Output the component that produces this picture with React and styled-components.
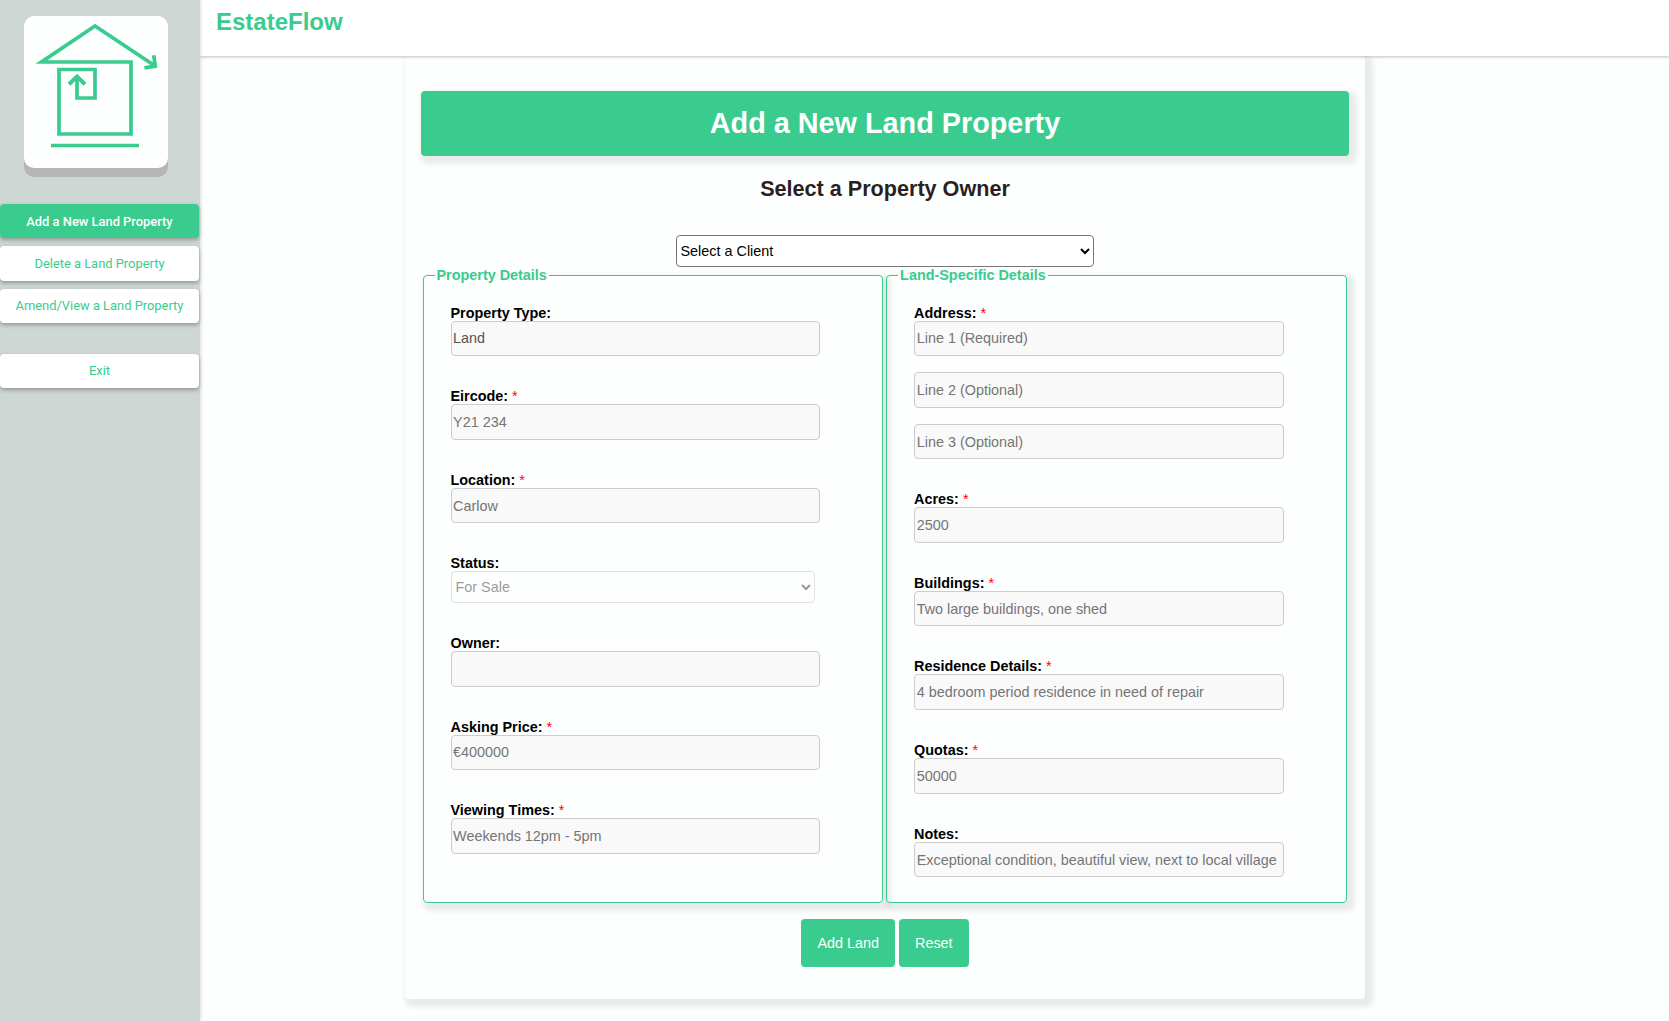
import React from "react";
import styled, { createGlobalStyle, css } from "styled-components";

const GREEN = "#3acb8e";
const PAPER = "#fdfffe";

const GlobalStyle = createGlobalStyle`
  * { box-sizing: border-box; }
  html, body { margin: 0; background: ${PAPER}; }
  body, input, select, button { font-family: "Liberation Sans", Arial, sans-serif; }
`;

const raised = css`
  box-shadow: 4px 4px 5px 4px rgba(0, 0, 0, 0.08);
`;

const Shell = styled.div`
  display: flex;
  height: 1021px;
  overflow: hidden;
`;

const Sidebar = styled.nav`
  position: relative;
  z-index: 2;
  flex: 0 0 200px;
  display: flex;
  flex-direction: column;
  align-items: flex-start;
  background: #ced7d4;
  box-shadow: 0 0 4px rgba(0, 0, 0, 0.2);
`;

const LogoCard = styled.div`
  width: 144px;
  height: 152px;
  margin: 16px 0 36px 24px;
  border-radius: 10px;
  background: ${PAPER};
  box-shadow: 0 9px 0 #b6b6b6;
`;

const NavButton = styled.button`
  width: 199px;
  height: 34.4px;
  margin: 0 0 8px;
  margin-top: ${(p) => (p.$separated ? "22.5px" : "0")};
  padding: 0;
  border: 0;
  border-radius: 4px;
  font-family: Roboto, sans-serif;
  font-size: 12.9px;
  font-weight: ${(p) => (p.$active ? 500 : 400)};
  color: ${(p) => (p.$active ? PAPER : GREEN)};
  background: ${(p) => (p.$active ? GREEN : "#fff")};
  box-shadow: 0 2px 4px rgba(0, 0, 0, 0.3);
`;

const Content = styled.div`
  flex: 1;
  display: flex;
  flex-direction: column;
`;

const Header = styled.header`
  position: relative;
  z-index: 1;
  flex: 0 0 56px;
  padding: 8px 16px;
  background: #fff;
  box-shadow: 0 1px 3px rgba(0, 0, 0, 0.25);
`;

const Brand = styled.div`
  font-size: 24px;
  line-height: 27px;
  font-weight: bold;
  color: ${GREEN};
`;

const Main = styled.main`
  display: flex;
  justify-content: center;
  align-items: flex-start;
  padding-right: 100px;
`;

const Card = styled.form`
  width: 960px;
  height: 943px;
  padding: 35px 16px 0;
  display: flex;
  flex-direction: column;
  align-items: center;
  border-radius: 4px;
  background: ${PAPER};
  ${raised}
`;

const Banner = styled.h1`
  width: 100%;
  height: 65px;
  margin: 0;
  padding-left: 1px;
  border-radius: 4px;
  font-size: 28.8px;
  line-height: 64px;
  text-align: center;
  color: #fff;
  background: ${GREEN};
  ${raised}
`;

const Subtitle = styled.h2`
  margin: 20px 0 34px;
  padding-left: 1px;
  font-size: 21.6px;
  line-height: 25px;
  color: #2b1f1f;
`;

const Select = styled.select`
  display: block;
  width: ${(p) => p.$width};
  height: ${(p) => p.$height};
  padding: 0;
  border: 1px solid #767676;
  border-radius: 4px;
  font-size: 14.4px;
  color: #000;
  background-color: #fff;
  &:disabled {
    color: #000;
    opacity: 0.4;
    border-color: #b5b5b5;
  }
`;

const Groups = styled.div`
  display: flex;
  gap: 3.2px;
  width: 924px;
`;

const Group = styled.fieldset`
  flex: 1;
  min-width: 0;
  height: 636px;
  margin: 0;
  padding: 21.5px 27px 0;
  border: 1px solid ${GREEN};
  border-radius: 4px;
  ${raised}
`;

const GroupTitle = styled.legend`
  margin-left: -16px;
  padding: 0 2px;
  font-size: 14.4px;
  line-height: 16px;
  font-weight: bold;
  color: ${GREEN};
`;

const Field = styled.div`
  margin-bottom: 32.047px;
`;

const Label = styled.label`
  display: block;
  height: 16px;
  font-size: 14.4px;
  line-height: 16px;
  font-weight: bold;
  color: #000;
`;

const Required = styled.span`
  font-weight: normal;
  color: #f00;
`;

const Input = styled.input`
  display: block;
  width: 369.6px;
  height: 35.5625px;
  padding: 1.2px 2px 1px 1.6px;
  border: 1px solid #ccc;
  border-radius: 4px;
  font-size: 14.4px;
  color: #545454;
  background: #f9f9f9;
  & + & { margin-top: 16px; }
  &::placeholder { color: #757575; }
`;

const Actions = styled.div`
  display: flex;
  gap: 4px;
  margin-top: 16px;
  padding-left: 1px;
`;

const ActionButton = styled.button`
  height: 48px;
  padding: 0 16px;
  border: 0;
  border-radius: 4px;
  font-size: 14.4px;
  color: ${PAPER};
  background: ${GREEN};
`;

const Logo = () => (
  <svg width="144" height="152" viewBox="24 16 144 152" fill="none" stroke={GREEN} strokeWidth="3.7">
    <path d="M154.4 65.5 L95 26 L41.5 62 H131 V134 H59 V69.5 H95 V98 H77 V77" />
    <path d="M69 84.2 L77 76.6 L85 84.2" strokeWidth="4" />
    <path d="M153.7 55.2 L155.3 66.1 L144.4 67.8" />
    <path d="M51 145.5 H139" />
  </svg>
);

const TextField = ({ label, required, value, placeholders = [""] }) => (
  <Field>
    <Label>
      {label} {required && <Required>*</Required>}
    </Label>
    {value !== undefined ? (
      <Input value={value} disabled readOnly />
    ) : (
      placeholders.map((text, i) => <Input key={i} placeholder={text} />)
    )}
  </Field>
);

export default function App() {
  return (
    <>
      <GlobalStyle />
      <Shell>
        <Sidebar>
          <LogoCard>
            <Logo />
          </LogoCard>
          <NavButton $active>Add a New Land Property</NavButton>
          <NavButton>Delete a Land Property</NavButton>
          <NavButton>Amend/View a Land Property</NavButton>
          <NavButton $separated>Exit</NavButton>
        </Sidebar>
        <Content>
          <Header>
            <Brand>EstateFlow</Brand>
          </Header>
          <Main>
            <Card>
              <Banner>Add a New Land Property</Banner>
              <Subtitle>Select a Property Owner</Subtitle>
              <Select $width="418px" $height="32px">
                <option>Select a Client</option>
              </Select>
              <Groups>
                <Group>
                  <GroupTitle>Property Details</GroupTitle>
                  <TextField label="Property Type:" value="Land" />
                  <TextField label="Eircode:" required placeholders={["Y21 234"]} />
                  <TextField label="Location:" required placeholders={["Carlow"]} />
                  <Field>
                    <Label>Status:</Label>
                    <Select $width="364px" $height="31.6px" disabled>
                      <option>For Sale</option>
                    </Select>
                  </Field>
                  <TextField label="Owner:" value="" />
                  <TextField label="Asking Price:" required placeholders={["€400000"]} />
                  <TextField label="Viewing Times:" required placeholders={["Weekends 12pm - 5pm"]} />
                </Group>
                <Group>
                  <GroupTitle>Land-Specific Details</GroupTitle>
                  <TextField
                    label="Address:"
                    required
                    placeholders={["Line 1 (Required)", "Line 2 (Optional)", "Line 3 (Optional)"]}
                  />
                  <TextField label="Acres:" required placeholders={["2500"]} />
                  <TextField label="Buildings:" required placeholders={["Two large buildings, one shed"]} />
                  <TextField
                    label="Residence Details:"
                    required
                    placeholders={["4 bedroom period residence in need of repair"]}
                  />
                  <TextField label="Quotas:" required placeholders={["50000"]} />
                  <TextField
                    label="Notes:"
                    placeholders={["Exceptional condition, beautiful view, next to local village"]}
                  />
                </Group>
              </Groups>
              <Actions>
                <ActionButton type="button">Add Land</ActionButton>
                <ActionButton type="reset">Reset</ActionButton>
              </Actions>
            </Card>
          </Main>
        </Content>
      </Shell>
    </>
  );
}
